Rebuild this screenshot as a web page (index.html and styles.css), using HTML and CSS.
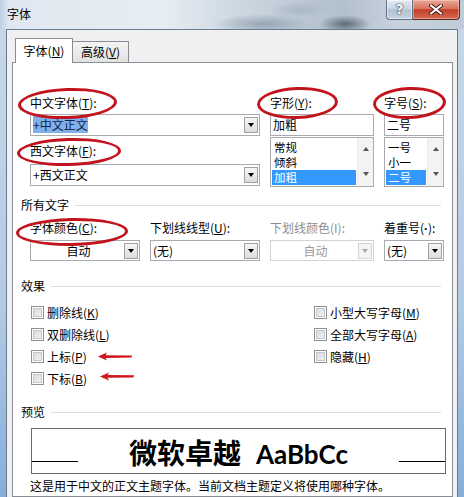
FILE: index.html
```html
<!DOCTYPE html>
<html lang="zh-CN">
  <head>
    <meta charset="UTF-8" />
    <title>字体</title>
    <link rel="stylesheet" href="styles.css">
  </head>
  <body>
    <div class="window">
      <div class="titlebar">
        <span class="title">字体</span>
        <div class="caption">
          <span class="btn-help">?</span>
          <span class="btn-close">
            <svg width="14" height="11" viewBox="0 0 14 11">
              <path d="M2 1.5 L12 9.5 M12 1.5 L2 9.5" stroke="#4b1e17" stroke-width="4" stroke-linecap="round" />
              <path d="M2 1.5 L12 9.5 M12 1.5 L2 9.5" stroke="#fff" stroke-width="2.2" stroke-linecap="round" />
            </svg>
          </span>
        </div>
      </div>

      <div class="client">
        <div class="tabs">
          <span class="tab active">字体(<u>N</u>)</span>
          <span class="tab">高级(<u>V</u>)</span>
        </div>

        <div class="panel">
          <div class="fonts">
            <div class="col">
              <label class="lbl circled c1">中文字体(<u>T</u>):</label>
              <div class="combo first">
                <span class="value"><span class="sel">+中文正文</span></span>
                <span class="drop"></span>
              </div>
              <label class="lbl circled c2 second">西文字体(<u>F</u>):</label>
              <div class="combo next">
                <span class="value">+西文正文</span>
                <span class="drop"></span>
              </div>
            </div>

            <div class="col">
              <label class="lbl circled c3">字形(<u>Y</u>):</label>
              <div class="edit">加粗</div>
              <div class="list">
                <ul>
                  <li>常规</li>
                  <li>倾斜</li>
                  <li class="on">加粗</li>
                </ul>
                <div class="scroll"><span class="up"></span><span class="down"></span></div>
              </div>
            </div>

            <div class="col">
              <label class="lbl circled c4">字号(<u>S</u>):</label>
              <div class="edit">二号</div>
              <div class="list">
                <ul>
                  <li>一号</li>
                  <li>小一</li>
                  <li class="on">二号</li>
                </ul>
                <div class="scroll"><span class="up"></span><span class="down"></span></div>
              </div>
            </div>
          </div>

          <div class="section top-gap">所有文字</div>

          <div class="alltext">
            <div class="col">
              <label class="lbl circled c5">字体颜色(<u>C</u>):</label>
              <div class="combo small">
                <span class="value center">自动</span>
                <span class="drop"></span>
              </div>
            </div>
            <div class="col">
              <label class="lbl">下划线线型(<u>U</u>):</label>
              <div class="combo small">
                <span class="value">(无)</span>
                <span class="drop"></span>
              </div>
            </div>
            <div class="col">
              <label class="lbl disabled">下划线颜色(I):</label>
              <div class="combo small disabled">
                <span class="value center">自动</span>
                <span class="drop"></span>
              </div>
            </div>
            <div class="col">
              <label class="lbl">着重号(<span class="latin">·</span>):</label>
              <div class="combo small">
                <span class="value">(无)</span>
                <span class="drop"></span>
              </div>
            </div>
          </div>

          <div class="section effects-gap">效果</div>

          <div class="effects">
            <div class="col">
              <div class="check"><span class="box"></span>删除线(<u>K</u>)</div>
              <div class="check"><span class="box"></span>双删除线(<u>L</u>)</div>
              <div class="check">
                <span class="box"></span>上标(<u>P</u>)
                <svg class="arrow" width="34" height="9" viewBox="0 0 34 9">
                  <path d="M0 4.6 L9 0.6 L7.6 3.3 L34 3.4 L33.5 5.6 L7.6 5.9 L9 8.6 Z" fill="#d2151c" />
                </svg>
              </div>
              <div class="check">
                <span class="box"></span>下标(<u>B</u>)
                <svg class="arrow second-arrow" width="34" height="9" viewBox="0 0 34 9">
                  <path d="M0 4.4 L9 0.4 L7.6 3.1 L34 3.2 L33.5 5.4 L7.6 5.7 L9 8.4 Z" fill="#d2151c" />
                </svg>
              </div>
            </div>
            <div class="col">
              <div class="check"><span class="box"></span>小型大写字母(<u>M</u>)</div>
              <div class="check"><span class="box"></span>全部大写字母(<u>A</u>)</div>
              <div class="check"><span class="box"></span>隐藏(<u>H</u>)</div>
            </div>
          </div>

          <div class="section preview-gap">预览</div>

          <div class="preview">
            <span class="rule"></span>
            <span class="sample">
              <span class="sample-cn">微软卓越</span>
              <span class="sample-en">AaBbCc</span>
            </span>
            <span class="rule"></span>
          </div>

          <div class="note">这是用于中文的正文主题字体。当前文档主题定义将使用哪种字体。</div>
        </div>
      </div>
    </div>
  </body>
</html>
```

FILE: styles.css
```css
* {
  box-sizing: border-box;
}

body {
  margin: 0;
  font-family: "Noto Sans CJK SC", "Liberation Sans", sans-serif;
  font-size: 12px;
  color: #000;
}

u {
  text-decoration: underline;
  text-underline-offset: 1px;
}

.latin {
  font-family: "Liberation Sans", sans-serif;
  font-weight: bold;
}

/* window frame */

.window {
  width: 464px;
  height: 497px;
  overflow: hidden;
  display: flex;
  flex-direction: column;
  background: linear-gradient(#c9d8e8, #b4cbe4 60%, #86aedb);
}

.titlebar {
  height: 29px;
  display: flex;
  justify-content: space-between;
  align-items: flex-start;
  background:
    radial-gradient(ellipse 26px 9px at 345px 24px, rgba(55, 68, 82, 0.7), transparent),
    radial-gradient(ellipse 50px 10px at 262px 24px, rgba(110, 128, 148, 0.55), transparent),
    radial-gradient(ellipse 30px 8px at 300px 10px, rgba(150, 165, 180, 0.5), transparent),
    linear-gradient(90deg, #bcd0e6 0, #dfe8f1 2%, #e7edf3 35%, #d2dce5 48%, #bfcbd7 62%, #b3c0cd 74%, #c8d2dc 86%, #bfcbd8 100%);
}

.title {
  padding: 6px 0 0 7px;
  line-height: 16px;
}

.caption {
  display: flex;
  margin-right: 4px;
}

.btn-help {
  width: 27px;
  height: 20px;
  border: 1px solid #5f7187;
  border-top: none;
  border-radius: 0 0 0 4px;
  background: linear-gradient(#e4ebf2, #c9d4df 48%, #b2c1d1 52%, #c7d3e0);
  box-shadow: inset 0 0 0 1px rgba(255, 255, 255, 0.55);
  color: #f4f7fa;
  font: bold 14px "DejaVu Sans", sans-serif;
  line-height: 18px;
  text-align: center;
  text-shadow: 0 0 1px #2a3a4e, 0 0 2px #2a3a4e;
}

.btn-close {
  width: 47px;
  height: 20px;
  border: 1px solid #5b2a23;
  border-top: none;
  border-left: none;
  border-radius: 0 0 4px 0;
  background: linear-gradient(#eaa99a, #d9735d 45%, #c43f27 52%, #d46a52);
  box-shadow: inset 0 0 0 1px rgba(255, 220, 210, 0.45);
  display: flex;
  align-items: center;
  justify-content: center;
}

.client {
  flex: 1;
  margin: 0 6px;
  border: 1px solid #6a7c92;
  border-bottom: none;
  background: #f0f0f0;
  padding: 8px 4px 0 5px;
  display: flex;
  flex-direction: column;
}

/* tabs */

.tabs {
  display: flex;
  align-items: flex-end;
  padding-left: 3px;
  margin-bottom: -1px;
  position: relative;
  z-index: 1;
}

.tab {
  width: 56px;
  height: 21px;
  margin-bottom: 1px;
  border: 1px solid #898c95;
  border-left: none;
  border-bottom: none;
  background: linear-gradient(#f4f4f4, #e2e2e2);
  text-align: center;
  line-height: 16px;
  padding-top: 2px;
}

.tab.active {
  width: 58px;
  height: 25px;
  margin-bottom: 0;
  border-left: 1px solid #898c95;
  background: #fff;
  padding-top: 4px;
}

.panel {
  flex: 1;
  border: 1px solid #898c95;
  background: #fff;
  padding: 31px 7px 0 17px;
}

/* labels and inputs */

.col {
  display: flex;
  flex-direction: column;
}

.lbl {
  display: block;
  height: 18px;
  line-height: 18px;
  white-space: nowrap;
}

.lbl.second {
  margin-top: 6px;
}

.lbl.disabled {
  color: #8d8d8d;
}

.circled {
  position: relative;
}

.circled::after {
  content: "";
  position: absolute;
  border: 3px solid #c3131c;
  border-radius: 50%;
}

.c1::after {
  left: -12px;
  top: -6px;
  width: 93px;
  height: 25px;
  transform: rotate(-2deg);
}

.c2::after {
  left: -13px;
  top: -4px;
  width: 98px;
  height: 22px;
  transform: rotate(-1.5deg);
}

.c3::after {
  left: -13px;
  top: -7px;
  width: 75px;
  height: 26px;
  transform: rotate(-2deg);
}

.c4::after {
  left: -11px;
  top: -7px;
  width: 67px;
  height: 26px;
  transform: rotate(-2deg);
}

.c5::after {
  left: -14px;
  top: -1px;
  width: 106px;
  height: 22px;
  transform: rotate(-1deg);
}

.fonts {
  display: grid;
  grid-template-columns: 230px 104px 60px;
  column-gap: 10px;
  align-items: start;
}

.combo {
  height: 22px;
  margin-top: 2px;
  border: 1px solid #a9abb1;
  background: #fff;
  display: flex;
  align-items: center;
  padding-right: 1px;
}

.combo.next {
  margin-top: 4px;
}

.combo.small {
  height: 21px;
  margin-top: 3px;
}

.value {
  flex: 1;
  padding-left: 2px;
  line-height: 16px;
  white-space: nowrap;
}

.value.center {
  text-align: center;
}

.sel {
  background: #80b1ec;
  color: #14234a;
}

.drop {
  width: 14px;
  height: 16px;
  border: 1px solid #a1a1a1;
  background: linear-gradient(#f6f6f6, #dcdcdc);
  display: flex;
  align-items: center;
  justify-content: center;
}

.drop::before {
  content: "";
  border-top: 4px solid #000;
  border-left: 3.5px solid transparent;
  border-right: 3.5px solid transparent;
}

.combo.disabled {
  border-color: #d3d3d3;
  color: #9a9a9a;
}

.combo.disabled .drop {
  border-color: #d6d6d6;
  background: #f4f4f4;
}

.combo.disabled .drop::before {
  border-top-color: #a8a8a8;
}

.edit {
  height: 22px;
  margin-top: 2px;
  border: 1px solid #a9abb1;
  padding-left: 2px;
  line-height: 20px;
}

.list {
  height: 50px;
  margin-top: 1px;
  border: 1px solid #a9abb1;
  display: flex;
}

.list ul {
  flex: 1;
  margin: 0;
  padding: 2px 1px 0 1px;
  list-style: none;
}

.list li {
  height: 15px;
  line-height: 15px;
  font-size: 11.5px;
  padding-left: 2px;
  overflow: hidden;
}

.list li.on {
  background: #3399ff;
  color: #fff;
}

.scroll {
  width: 16px;
  background: #f3f3f3;
  border-left: 1px solid #ececec;
  display: flex;
  flex-direction: column;
  justify-content: space-between;
  align-items: center;
  padding: 9px 0 10px;
}

.up {
  border-bottom: 4px solid #555;
  border-left: 3.5px solid transparent;
  border-right: 3.5px solid transparent;
}

.down {
  border-top: 4px solid #555;
  border-left: 3.5px solid transparent;
  border-right: 3.5px solid transparent;
}

/* section headers */

.section {
  display: flex;
  align-items: center;
  margin-left: -9px;
  height: 16px;
  line-height: 16px;
}

.section::after {
  content: "";
  flex: 1;
  border-top: 1px solid #dedede;
  margin: 0 4px 0 6px;
}

.top-gap {
  margin-top: 10px;
}

.effects-gap {
  margin-top: 17px;
}

.preview-gap {
  margin-top: 15px;
}

.alltext {
  display: grid;
  grid-template-columns: 110px 110px 104px 60px;
  column-gap: 10px;
  margin-top: 6px;
}

/* effects */

.effects {
  display: grid;
  grid-template-columns: 283px 1fr;
  margin-top: 7px;
}

.check {
  height: 22px;
  display: flex;
  align-items: center;
  white-space: nowrap;
}

.box {
  width: 13px;
  height: 13px;
  margin: 0 3px 0 1px;
  border: 1px solid #8e8f8f;
  background: linear-gradient(135deg, #d3d7dc, #f6f6f6);
  box-shadow: inset 0 0 0 1px #fff, inset 0 0 0 2px #c3c7cc;
}

.arrow {
  margin-left: 11px;
}

.second-arrow {
  margin-left: 13px;
  margin-top: -3px;
}

/* preview */

.preview {
  width: 415px;
  height: 46px;
  margin: 8px 0 0 1px;
  border: 1px solid #6b6b6b;
  display: flex;
  align-items: center;
  justify-content: space-between;
}

.rule {
  width: 46px;
  align-self: flex-end;
  margin-bottom: 11px;
  border-bottom: 1px solid #000;
}

.sample {
  display: flex;
  align-items: baseline;
  font-weight: bold;
  margin-top: 2px;
}

.sample-cn {
  font-size: 28px;
  line-height: 34px;
}

.sample-en {
  font-family: Lato, "Liberation Sans", sans-serif;
  font-size: 26px;
  margin-left: 15px;
}

.note {
  margin-top: 4px;
  line-height: 16px;
  white-space: nowrap;
}
```
